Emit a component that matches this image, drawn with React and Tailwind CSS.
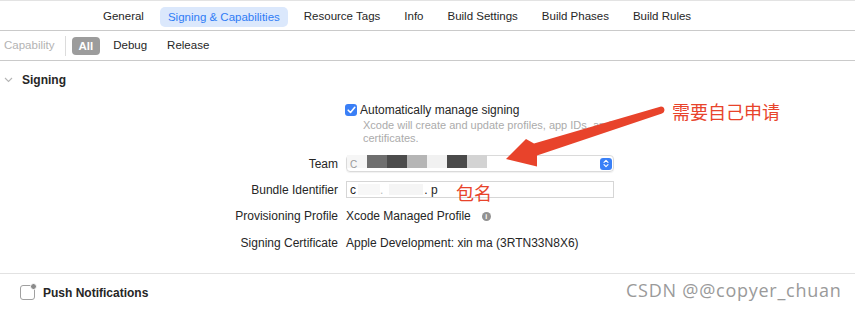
import React from "react";

const tabs = ["General", "Signing & Capabilities", "Resource Tags", "Info", "Build Settings", "Build Phases", "Build Rules"];

// bloques del nombre de equipo tapado en la captura
const blurTeam = ["#f6f6f6", "#6f6f6f", "#4c4c4c", "#b5b5b5", "#f1f1f1", "#4a4a4a", "#d3d3d3"];

function Label({ children }) {
  return <div className="w-[338px] shrink-0 text-right text-[#262626]">{children}</div>;
}

export default function App() {
  return (
    <div
      className="relative w-[855px] h-[310px] overflow-hidden bg-white text-[12px] text-[#262626]"
      style={{ fontFamily: '"Liberation Sans", Arial, sans-serif' }}
    >
      {/* TABS */}
      <div className="border-t border-[#e3e3e3]">
        <div className="flex h-[30px] items-center gap-[8px] pl-[95px] pt-[2px] text-[11.5px] border-b border-[#cacaca]">
          {tabs.map((t) =>
            t === "Signing & Capabilities" ? (
              <span key={t} className="rounded-[5px] bg-[#dbe8fc] px-2 h-[20px] leading-[20px] text-[#2f7cf6]">
                {t}
              </span>
            ) : (
              <span key={t} className="px-2">
                {t}
              </span>
            )
          )}
        </div>
      </div>

      {/* FILTRO */}
      <div className="flex h-[30px] items-center text-[11.5px] border-b border-[#cacaca]">
        <span className="ml-[4px] text-[#b3b3b3]">Capability</span>
        <div className="ml-[10px] h-[20px] w-px bg-[#dcdcdc]"></div>
        <span className="ml-[6px] rounded-[4px] bg-[#9c9c9c] px-[7px] h-[18px] leading-[18px] font-bold text-white">All</span>
        <span className="ml-[13px]">Debug</span>
        <span className="ml-[20px]">Release</span>
      </div>

      {/* SIGNING */}
      <div className="flex h-[38px] items-center">
        <svg width="9" height="6" viewBox="0 0 9 6" className="ml-[4px]">
          <polyline points="1,1 4.5,4.5 8,1" fill="none" stroke="#b5b5b5" strokeWidth="1.1" />
        </svg>
        <span className="ml-[9px] font-bold">Signing</span>
      </div>

      <div className="mt-[4px] flex flex-col">
        <div className="flex h-[14px] items-center">
          <Label></Label>
          <div className="ml-[7px] flex h-[12px] w-[12px] items-center justify-center rounded-[3px] bg-[#3a7ff6]">
            <svg width="9" height="8" viewBox="0 0 9 8">
              <polyline points="1.2,4.2 3.5,6.5 7.8,1.3" fill="none" stroke="white" strokeWidth="1.6" strokeLinecap="round" strokeLinejoin="round" />
            </svg>
          </div>
          <span className="ml-[3px]">Automatically manage signing</span>
        </div>
        <div className="mt-[2px] pl-[363px] text-[11px] leading-[13px] text-[#ababab]">
          Xcode will create and update profiles, app IDs, and
          <br />
          certificates.
        </div>

        <div className="mt-[10px] flex h-[17px] items-center">
          <Label>Team</Label>
          <div className="ml-2 flex h-[17px] w-[268px] items-start rounded-[4px] border border-[#dadada] shadow-[0_1px_1px_rgba(0,0,0,0.06)]">
            <div className="flex -mt-px h-[13px]">
              {blurTeam.map((c, i) => (
                <div key={i} className="h-[13px] w-[20px]" style={{ backgroundColor: c }}>
                  {i === 0 ? <span className="ml-[3px] text-[10px] leading-[13px] text-[#9a9a9a]">C</span> : null}
                </div>
              ))}
            </div>
            <div className="ml-auto mr-[1px] self-center flex h-[12px] w-[12px] items-center justify-center rounded-[3px] bg-[#3a80f7]">
              <svg width="6" height="9" viewBox="0 0 6 9">
                <polyline points="1,3.3 3,1.3 5,3.3" fill="none" stroke="white" strokeWidth="1.1" strokeLinecap="round" strokeLinejoin="round" />
                <polyline points="1,5.7 3,7.7 5,5.7" fill="none" stroke="white" strokeWidth="1.1" strokeLinecap="round" strokeLinejoin="round" />
              </svg>
            </div>
          </div>
        </div>

        <div className="mt-[9px] flex h-[17px] items-center">
          <Label>Bundle Identifier</Label>
          <div className="ml-2 flex h-[17px] w-[268px] items-center border border-[#d6d6d6]">
            <span className="ml-[3px]">c</span>
            <div className="ml-[2px] h-[11px] w-[22px] bg-[#f7f7f7]"></div>
            <span className="text-[#bdbdbd]">.</span>
            <div className="ml-[6px] h-[11px] w-[34px] bg-[#f5f5f5]"></div>
            <span className="ml-[1px]">. p</span>
          </div>
        </div>

        <div className="mt-[9px] flex h-[18px] items-center">
          <Label>Provisioning Profile</Label>
          <span className="ml-2">Xcode Managed Profile</span>
          <div className="ml-[11px] flex h-[9px] w-[9px] items-center justify-center rounded-full bg-[#929292] text-[7px] font-bold leading-none text-white">
            i
          </div>
        </div>

        <div className="mt-[9px] flex h-[18px] items-center">
          <Label>Signing Certificate</Label>
          <span className="ml-2">Apple Development: xin ma (3RTN33N8X6)</span>
        </div>

        <div className="mt-[21px] border-t border-[#e2e2e2]"></div>

        <div className="flex h-[37px] items-center">
          <div className="relative ml-[20px] h-[15px] w-[15px] rounded-[3px] border border-[#a0a0a0] bg-white">
            <div className="absolute -right-[3px] -top-[3px] h-[7px] w-[7px] rounded-full border border-white bg-[#8a8a8a]"></div>
          </div>
          <span className="ml-[8px] font-bold">Push Notifications</span>
        </div>
      </div>

      {/* ANOTACIONES */}
      <svg className="pointer-events-none absolute left-0 top-0" width="855" height="310" viewBox="0 0 855 310">
        <path
          d="M661,106.5 L534,143.5 L526,139 L506,159 L537,166.5 L537,155.5 L662,113.5 A3.6,3.6 0 0 0 661,106.5 Z"
          fill="#e8432b"
        />
      </svg>
      <div
        className="absolute left-[672px] top-[99px] text-[18px] leading-[24px] text-[#e8432b]"
        style={{ fontFamily: '"Noto Sans CJK SC", sans-serif' }}
      >
        需要自己申请
      </div>
      <div
        className="absolute left-[456px] top-[180px] text-[18px] leading-[24px] text-[#e8432b]"
        style={{ fontFamily: '"Noto Sans CJK SC", sans-serif' }}
      >
        包名
      </div>
      <div
        className="absolute left-[626px] top-[277px] text-[18px] leading-[26px] tracking-[0.75px] text-[#9a9a9a]"
        style={{ fontFamily: '"Open Sans", sans-serif' }}
      >
        CSDN @@copyer_chuan
      </div>
    </div>
  );
}
